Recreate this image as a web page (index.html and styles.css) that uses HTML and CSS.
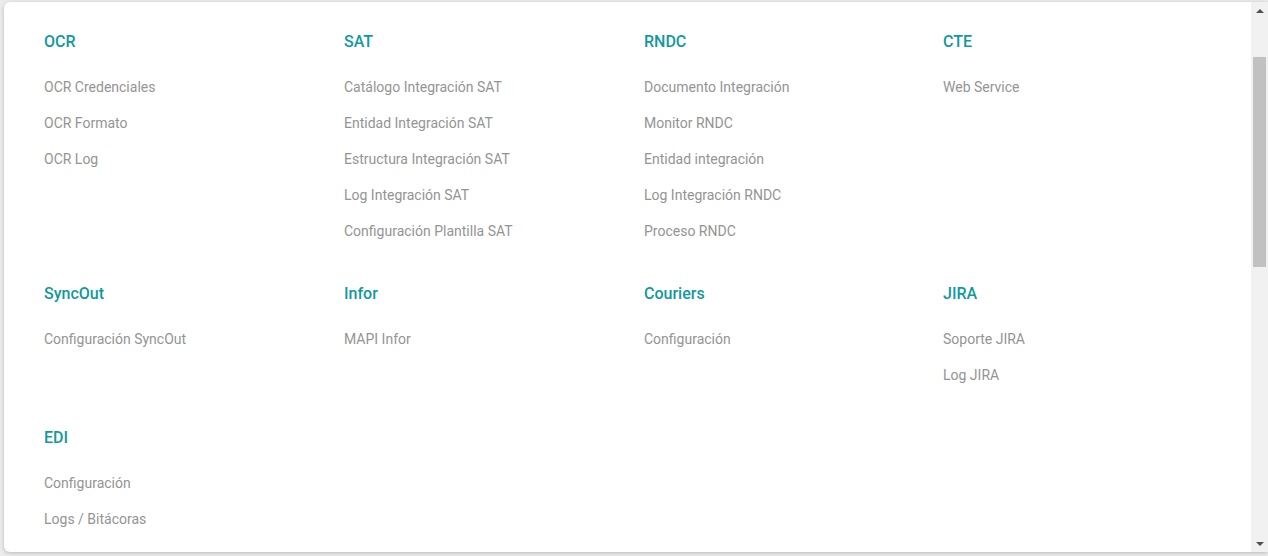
FILE: index.html
```html
<!DOCTYPE html>
<html lang="es">
<head>
<meta charset="utf-8">
<title>Integraciones</title>
<link rel="stylesheet" href="styles.css">
</head>
<body>
<div class="card">
  <div class="content">
    <div class="menu-grid">
      <section class="group">
        <h3 class="group-title">OCR</h3>
        <ul class="links">
          <li>OCR Credenciales</li>
          <li>OCR Formato</li>
          <li>OCR Log</li>
        </ul>
      </section>
      <section class="group">
        <h3 class="group-title">SAT</h3>
        <ul class="links">
          <li>Catálogo Integración SAT</li>
          <li>Entidad Integración SAT</li>
          <li>Estructura Integración SAT</li>
          <li>Log Integración SAT</li>
          <li>Configuración Plantilla SAT</li>
        </ul>
      </section>
      <section class="group">
        <h3 class="group-title">RNDC</h3>
        <ul class="links">
          <li>Documento Integración</li>
          <li>Monitor RNDC</li>
          <li>Entidad integración</li>
          <li>Log Integración RNDC</li>
          <li>Proceso RNDC</li>
        </ul>
      </section>
      <section class="group">
        <h3 class="group-title">CTE</h3>
        <ul class="links">
          <li>Web Service</li>
        </ul>
      </section>
      <section class="group">
        <h3 class="group-title">SyncOut</h3>
        <ul class="links">
          <li>Configuración SyncOut</li>
        </ul>
      </section>
      <section class="group">
        <h3 class="group-title">Infor</h3>
        <ul class="links">
          <li>MAPI Infor</li>
        </ul>
      </section>
      <section class="group">
        <h3 class="group-title">Couriers</h3>
        <ul class="links">
          <li>Configuración</li>
        </ul>
      </section>
      <section class="group">
        <h3 class="group-title">JIRA</h3>
        <ul class="links">
          <li>Soporte JIRA</li>
          <li>Log JIRA</li>
        </ul>
      </section>
      <section class="group">
        <h3 class="group-title">EDI</h3>
        <ul class="links">
          <li>Configuración</li>
          <li>Logs / Bitácoras</li>
        </ul>
      </section>
    </div>
  </div>
  <div class="scrollbar">
    <div class="sb-btn"><span class="tri-up"></span></div>
    <div class="sb-track"><div class="sb-thumb"></div></div>
    <div class="sb-btn"><span class="tri-down"></span></div>
  </div>
</div>
</body>
</html>
```

FILE: styles.css
```css
* { box-sizing: border-box; }
html, body { height: 100%; }
body {
  margin: 0;
  background: #ececec;
  font-family: Roboto, "Liberation Sans", Arial, sans-serif;
  overflow: hidden;
  padding: 2px 0 0 4px;
}
.card {
  height: 550px;
  background: #fff;
  border-radius: 6px 0 0 6px;
  box-shadow: 0 1px 4px rgba(0, 0, 0, 0.22);
  display: flex;
  overflow: hidden;
}
.content {
  flex: 1;
  padding: 28px 0 0 40px;
}
.menu-grid {
  display: grid;
  grid-template-columns: repeat(3, 300px) 299px;
  row-gap: 33px;
  align-items: start;
}
.group:nth-child(4n) { margin-left: -1px; }
.group-title {
  margin: 0 0 15px;
  font-size: 16px;
  font-weight: 500;
  line-height: 24px;
  color: #11999e;
}
.links {
  list-style: none;
  margin: 0;
  padding: 0;
}
.links li {
  font-size: 14px;
  line-height: 20px;
  padding: 8px 0;
  color: #949494;
}
.scrollbar {
  width: 17px;
  flex: 0 0 17px;
  background: #f1f1f1;
  display: flex;
  flex-direction: column;
}
.sb-btn {
  height: 17px;
  flex: 0 0 17px;
  display: flex;
  align-items: center;
  justify-content: center;
}
.tri-up, .tri-down {
  width: 0;
  height: 0;
  border-left: 4px solid transparent;
  border-right: 4px solid transparent;
}
.tri-up { border-bottom: 4px solid #505050; }
.tri-down { border-top: 4px solid #505050; }
.sb-track {
  flex: 1;
  padding: 38px 2px 0;
}
.sb-thumb {
  height: 210px;
  background: #c1c1c1;
}
```
